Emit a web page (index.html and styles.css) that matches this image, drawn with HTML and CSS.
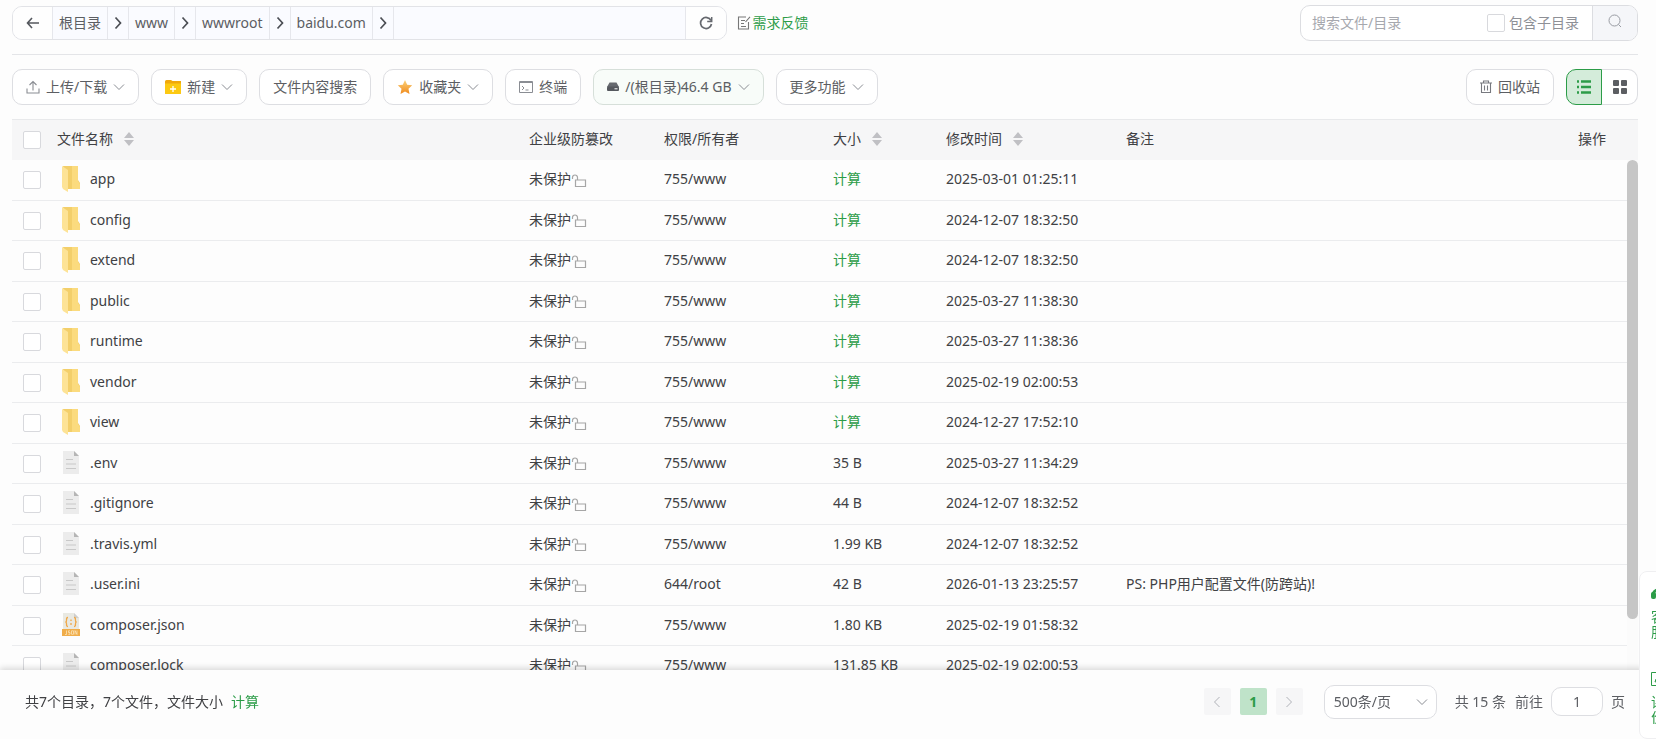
FILE: index.html
```
<!DOCTYPE html>
<html lang="zh-CN">

<head>
    <meta charset="UTF-8">
    <meta name="viewport" content="width=device-width, initial-scale=1.0">
    <title>文件管理</title>
    <link rel="stylesheet" href="styles.css">
</head>

<body>
    <!-- shared icons -->
    <svg class="sprite" width="0" height="0">
        <symbol id="i-down" viewBox="0 0 12 12"><path d="M1 3.500 6 8.500l5-5" fill="none" stroke="#8a8d93" /></symbol>
        <symbol id="i-next" viewBox="0 0 14 14"><path d="M4.500 1.500l5 5.500-5 5.500" fill="none" stroke="currentColor" stroke-width="1.700" /></symbol>
        <symbol id="i-folder" viewBox="0 0 18 26">
            <path d="M1 0h15v14l2 3v6H6z" fill="#f3cf6a" />
            <path d="M10 0h6v15l2 3v5h-8z" fill="#fbdb7e" />
            <path d="M0 0l6 4v22l-5-3-1-2z" fill="#fde396" />
        </symbol>
        <symbol id="i-file" viewBox="0 0 18 24">
            <path d="M1 0h11l5 5v18H1z" fill="#ececec" />
            <path d="M12 0l5 5h-5z" fill="#b5b5b5" />
            <path d="M4 8.500h7M4 13h10M4 17.500h10" stroke="#c8c8c8" />
        </symbol>
        <symbol id="i-json" viewBox="0 0 18 24">
            <path d="M1 0h11l5 5v12H1z" fill="#e9e9e2" />
            <path d="M12 0l5 5h-5z" fill="#cfcfcf" />
            <path d="M6 4.500c-3 0 0 4-2.500 4.500C6 9.500 3 13.500 6 13.500M12 4.500c3 0 0 4 2.500 4.500-2.500.5.500 4.500-2.500 4.500M9 6.500v1.500M9 10v2" fill="none" stroke="#f0a848" stroke-width="1.300" />
            <path d="M0 16h18v7H0z" fill="#f0ad4a" />
            <path d="M4.500 17.500v4H3M8 17.800H6.500v1.700H8v1.800H6.300M9.500 17.800h2v3.500h-2zM13 21.500v-4l2 4v-4" fill="none" stroke="#fbe3b8" stroke-width=".8" />
        </symbol>
        <symbol id="i-lock" viewBox="0 0 16 14">
            <path d="M1.500 5V3.500a2.500 2.500 0 0 1 5 0V6M4.500 6h10v6.500h-10z" fill="none" stroke="#a6a6a6" stroke-width="1.200" />
        </symbol>
        <symbol id="i-sort" viewBox="0 0 10 14"><path d="M5 0l5 6H0zM5 14l5-6H0z" fill="#c0c0c4" /></symbol>
    </svg>

    <main class="file-manager">
        <header class="top-bar">
            <nav class="path">
                <button class="path-back" aria-label="返回">
                    <svg width="14" height="12" viewBox="0 0 14 12"><path d="M6 1 1.500 6 6 11M1.500 6H13" fill="none" stroke="#55585e" stroke-width="1.600" /></svg>
                </button>
                <a href="#">根目录</a>
                <span class="sep"><svg width="14" height="14"><use href="#i-next" /></svg></span>
                <a href="#">www</a>
                <span class="sep"><svg width="14" height="14"><use href="#i-next" /></svg></span>
                <a href="#">wwwroot</a>
                <span class="sep"><svg width="14" height="14"><use href="#i-next" /></svg></span>
                <a href="#">baidu.com</a>
                <span class="sep"><svg width="14" height="14"><use href="#i-next" /></svg></span>
                <input type="text" class="path-input" aria-label="路径">
                <button class="path-refresh" aria-label="刷新">
                    <svg width="14" height="14" viewBox="0 0 14 14"><path d="M12 4.500A5.500 5.500 0 1 0 12.500 8" fill="none" stroke="#66696f" stroke-width="1.700" /><path d="M12.700 1v4.500H8.200" fill="none" stroke="#66696f" stroke-width="1.500" /></svg>
                </button>
            </nav>
            <a class="feedback" href="#">
                <svg width="14" height="14" viewBox="0 0 14 14"><path d="M9 1H1.500v12h10V6M4 4.500h4M4 7.500h3M4 10.500h5M8.500 6 13 .8" fill="none" stroke="#777" stroke-width="1.100" /></svg>需求反馈
            </a>
            <form class="search">
                <input type="text" class="search-text" placeholder="搜索文件/目录" aria-label="搜索文件/目录">
                <label><input type="checkbox">包含子目录</label>
                <button type="button" aria-label="搜索">
                    <svg width="14" height="14" viewBox="0 0 14 14"><circle cx="6.500" cy="6.500" r="5.500" fill="none" stroke="#999ca3" /><path d="M10.500 10.500 13 13" stroke="#999ca3" /></svg>
                </button>
            </form>
        </header>

        <div class="toolbar">
            <button class="btn">
                <svg width="14" height="14" viewBox="0 0 14 14"><path d="M1 8.500v4.500h12V8.500M7 10.500V1.500M3.500 5 7 1.500 10.500 5" fill="none" stroke="#8a8d93" stroke-width="1.100" /></svg>
                上传/下载
                <svg width="12" height="12"><use href="#i-down" /></svg>
            </button>
            <button class="btn">
                <svg width="16" height="14" viewBox="0 0 16 14"><path d="M0 1.500Q0 0 1.500 0H6l1.500 1H16v12q0 1-1 1H1q-1 0-1-1z" fill="#f0a80c" /><path d="M0 3.500h16V13q0 1-1 1H1q-1 0-1-1z" fill="#fcc912" /><path d="M8 6v6M5 9h6" stroke="#fff" stroke-width="1.300" /></svg>
                新建
                <svg width="12" height="12"><use href="#i-down" /></svg>
            </button>
            <button class="btn">文件内容搜索</button>
            <button class="btn">
                <svg width="16" height="16" viewBox="0 0 16 16"><defs><linearGradient id="star" x2="0" y2="1"><stop stop-color="#fbd27a" /><stop offset="1" stop-color="#f08a1c" /></linearGradient></defs><path d="M8 1l2.200 4.700 5 .6-3.700 3.500 1 5.200L8 12.500 3.500 15l1-5.200L.8 6.300l5-.6z" fill="url(#star)" /></svg>
                收藏夹
                <svg width="12" height="12"><use href="#i-down" /></svg>
            </button>
            <button class="btn">
                <svg width="14" height="14" viewBox="0 0 14 14"><path d="M.5 1.500h13v11H.5zM.5 2.500h13M3 6l2 2-2 2M6.500 10h3" fill="none" stroke="#8a8d93" /></svg>
                终端
            </button>
            <button class="btn btn-disk">
                <svg width="12" height="12" viewBox="0 0 12 12"><path d="M2.500 1.500h7L12 6H0z" fill="#66696f" /><rect y="5.500" width="12" height="4.500" rx="1" fill="#55585e" /><path d="M7.500 7.800h3" stroke="#fff" /></svg>
                /(根目录)46.4 GB
                <svg width="12" height="12"><use href="#i-down" /></svg>
            </button>
            <button class="btn">
                更多功能
                <svg width="12" height="12"><use href="#i-down" /></svg>
            </button>

            <button class="btn btn-recycle">
                <svg width="12" height="14" viewBox="0 0 12 14"><path d="M0 3h12M3.500 3V1h5v2M1.500 3v9.500h9V3M4.500 5.500v5M7.500 5.500v5" fill="none" stroke="#77797f" stroke-width="1.100" /></svg>
                回收站
            </button>
            <div class="view-switch">
                <button class="active" aria-label="列表">
                    <svg width="14" height="14" viewBox="0 0 14 14"><path d="M0 1.500h2M4 1.500h10M0 7h2M4 7h10M0 12.500h2M4 12.500h10" stroke="#2c9c48" stroke-width="2.400" /></svg>
                </button>
                <button aria-label="网格">
                    <svg width="14" height="14" viewBox="0 0 14 14" fill="#5c5e62"><rect width="6" height="6" rx="1" /><rect x="8" width="6" height="6" rx="1" /><rect y="8" width="6" height="6" rx="1" /><rect x="8" y="8" width="6" height="6" rx="1" /></svg>
                </button>
            </div>
        </div>

        <section class="table-wrap">
            <div class="table-scroll">
                <table>
                    <thead>
                        <tr>
                            <th class="col-check"><input type="checkbox" aria-label="全选"></th>
                            <th class="col-name">文件名称<svg class="sort" width="10" height="14"><use href="#i-sort" /></svg></th>
                            <th class="col-lock">企业级防篡改</th>
                            <th class="col-owner">权限/所有者</th>
                            <th class="col-size">大小<svg class="sort" width="10" height="14"><use href="#i-sort" /></svg></th>
                            <th class="col-time">修改时间<svg class="sort" width="10" height="14"><use href="#i-sort" /></svg></th>
                            <th>备注</th>
                            <th class="col-action">操作</th>
                        </tr>
                    </thead>
                    <tbody id="file-list"></tbody>
                </table>
            </div>
            <div class="scrollbar"><div class="thumb"></div></div>
        </section>

        <footer>
            <p>共7个目录，7个文件，文件大小<a href="#">计算</a></p>
            <div class="pager">
                <button class="page-btn" disabled aria-label="上一页"><svg width="14" height="14" viewBox="0 0 14 14"><path d="M9.500 2l-5 5 5 5" fill="none" stroke="#b0b2b8" /></svg></button>
                <button class="page-btn current">1</button>
                <button class="page-btn" disabled aria-label="下一页"><svg width="14" height="14" viewBox="0 0 14 14"><path d="M4.500 2l5 5-5 5" fill="none" stroke="#b0b2b8" /></svg></button>
                <div class="page-size">
                    <select aria-label="每页条数"><option>500条/页</option></select>
                    <svg width="12" height="12"><use href="#i-down" /></svg>
                </div>
                <span class="total">共 15 条</span>
                <label>前往<input type="text" value="1">页</label>
            </div>
        </footer>
    </main>

    <aside class="side-tools">
        <a href="#">
            <svg width="14" height="14" viewBox="0 0 14 14"><path d="M2 8a5 5 0 0 1 10 0" fill="none" stroke="#2c9c48" stroke-width="3" /><rect y="5" width="5" height="7" rx="2" fill="#2c9c48" /><rect x="9" y="5" width="5" height="7" rx="2" fill="#2c9c48" /></svg>
            <span>客服</span>
        </a>
        <a href="#">
            <svg width="14" height="14" viewBox="0 0 14 14"><path d="M.5.500h13v13H.5zM4 10l1-3 4-4 2 2-4 4z" fill="none" stroke="#2c9c48" /></svg>
            <span>评价</span>
        </a>
    </aside>

    <script>
        const files = [
            { name: 'app', type: 'folder', time: '2025-03-01 01:25:11' },
            { name: 'config', type: 'folder', time: '2024-12-07 18:32:50' },
            { name: 'extend', type: 'folder', time: '2024-12-07 18:32:50' },
            { name: 'public', type: 'folder', time: '2025-03-27 11:38:30' },
            { name: 'runtime', type: 'folder', time: '2025-03-27 11:38:36' },
            { name: 'vendor', type: 'folder', time: '2025-02-19 02:00:53' },
            { name: 'view', type: 'folder', time: '2024-12-27 17:52:10' },
            { name: '.env', type: 'file', size: '35 B', time: '2025-03-27 11:34:29' },
            { name: '.gitignore', type: 'file', size: '44 B', time: '2024-12-07 18:32:52' },
            { name: '.travis.yml', type: 'file', size: '1.99 KB', time: '2024-12-07 18:32:52' },
            { name: '.user.ini', type: 'file', size: '42 B', time: '2026-01-13 23:25:57', owner: '644/root', note: 'PS: PHP用户配置文件(防跨站)!' },
            { name: 'composer.json', type: 'json', size: '1.80 KB', time: '2025-02-19 01:58:32' },
            { name: 'composer.lock', type: 'file', size: '131.85 KB', time: '2025-02-19 02:00:53' }
        ];

        document.getElementById('file-list').innerHTML = files.map(file => `
            <tr>
                <td class="col-check"><input type="checkbox" aria-label="${file.name}"></td>
                <td><div class="file-name"><svg width="18" height="${file.type === 'folder' ? 26 : 24}"><use href="#i-${file.type}" /></svg>${file.name}</div></td>
                <td><div class="lock">未保护<svg width="16" height="14"><use href="#i-lock" /></svg></div></td>
                <td>${file.owner || '755/www'}</td>
                <td>${file.size || '<a href="#">计算</a>'}</td>
                <td>${file.time}</td>
                <td>${file.note || ''}</td>
                <td></td>
            </tr>
        `).join('');
    </script>
</body>

</html>
```
FILE: styles.css
```
/* General styles */
* {
    box-sizing: border-box;
}

body {
    margin: 0;
    background: #fdfdfd;
    color: #404144;
    font-family: "Noto Sans", "Noto Sans CJK SC", sans-serif;
    font-size: 14px;
    line-height: 20px;
    overflow: hidden;
}

button,
input,
select {
    font: inherit;
    color: inherit;
    margin: 0;
}

button {
    cursor: pointer;
}

svg {
    flex-shrink: 0;
}

a {
    color: #2c9c48;
    text-decoration: none;
}

input[type="checkbox"] {
    appearance: none;
    display: block;
    width: 18px;
    height: 18px;
    border: 1px solid #d8d9dd;
    border-radius: 2px;
    background: #fff;
}

.sprite {
    position: absolute;
}

.file-manager {
    display: flex;
    flex-direction: column;
    height: 100vh;
}

/* Path and search */
.top-bar {
    display: flex;
    align-items: center;
    height: 55px;
    margin: 0 18px 0 12px;
    padding-bottom: 9px;
    border-bottom: 1px solid #e4e5e8;
}

.path {
    display: flex;
    width: 44%;
    height: 34px;
    border: 1px solid #e2e3e7;
    border-radius: 10px;
    background: #fafbff;
    color: #5c5e63;
    overflow: hidden;
}

.path > * {
    display: flex;
    align-items: center;
    justify-content: center;
    border: 0;
    border-right: 1px solid #e6e7ec;
    color: inherit;
}

.path a {
    padding: 0 6px;
}

.path .sep {
    width: 21px;
    color: #4c4f55;
}

.path button {
    width: 40px;
    background: #fefefe;
}

.path .path-refresh {
    border-right: 0;
}

.path .path-input {
    flex: 1;
    min-width: 0;
    background: transparent;
}

.feedback {
    display: flex;
    align-items: center;
    gap: 1px;
    margin-left: 10px;
}

.search {
    display: flex;
    width: 338px;
    height: 36px;
    margin-left: auto;
    border: 1px solid #dcdde1;
    border-radius: 10px;
    background: #fff;
    color: #8e9096;
    overflow: hidden;
}

.search-text {
    flex: 1;
    min-width: 0;
    border: 0;
    padding: 0 11px;
    background: transparent;
}

.search-text::placeholder {
    color: #a6a8ae;
}

.search label {
    display: flex;
    align-items: center;
    gap: 4px;
    padding-right: 13px;
}

.search button {
    width: 45px;
    border: 0;
    border-left: 1px solid #dcdde1;
    background: #f5f6f9;
}

/* Toolbar */
.toolbar {
    display: flex;
    gap: 12px;
    padding: 14px 18px 14px 12px;
}

.btn {
    display: flex;
    align-items: center;
    gap: 6px;
    height: 36px;
    padding: 0 13px;
    border: 1px solid #dddee2;
    border-radius: 10px;
    background: #fff;
    color: #5c5e63;
    white-space: nowrap;
}

.btn-disk {
    background: #f8fcf9;
    border-color: #d6dfd9;
}

.btn-recycle {
    margin-left: auto;
}

.view-switch {
    display: flex;
}

.view-switch button {
    display: flex;
    align-items: center;
    justify-content: center;
    width: 36px;
    height: 36px;
    border: 1px solid #dddee2;
    border-left: 0;
    border-radius: 0 10px 10px 0;
    background: #fff;
}

.view-switch .active {
    border: 1px solid #2c9c48;
    border-radius: 10px 0 0 10px;
    background: #d4ecda;
}

/* File table */
.table-wrap {
    position: relative;
    flex: 1;
    min-height: 0;
    margin: 0 18px 0 12px;
}

.table-scroll {
    height: 100%;
    overflow: auto;
    scrollbar-width: none;
}

table {
    width: 100%;
    table-layout: fixed;
    border-collapse: separate;
    border-spacing: 0;
}

th,
td {
    height: 40px;
    padding: 0 0 2px 11px;
    border-bottom: 1px solid #ebecee;
    text-align: left;
    font-weight: normal;
    white-space: nowrap;
}

tbody tr:nth-child(odd) td {
    height: 41px;
}

th {
    position: sticky;
    top: 0;
    height: 41px;
    border-top: 1px solid #e8e9eb;
    border-bottom: 0;
    background: #f6f6f7;
}

.col-check {
    width: 34px;
    padding-bottom: 0;
}

.col-name {
    width: 472px;
}

.col-lock {
    width: 135px;
}

.col-owner {
    width: 169px;
}

.col-size {
    width: 113px;
}

.col-time {
    width: 180px;
}

.col-action {
    padding-right: 32px;
    text-align: right;
}

.sort {
    margin-left: 11px;
    vertical-align: -2px;
}

.file-name {
    display: flex;
    align-items: center;
    gap: 10px;
    height: 26px;
    padding-left: 5px;
}

.lock {
    display: flex;
    align-items: center;
}

.lock svg {
    margin-top: 3px;
}

.scrollbar {
    position: absolute;
    top: 41px;
    right: 0;
    bottom: 0;
    width: 11px;
    background: #fbfbfb;
}

.thumb {
    height: 90%;
    border-radius: 6px;
    background: #c6c6c6;
}

/* Footer */
footer {
    position: relative;
    display: flex;
    align-items: center;
    justify-content: space-between;
    height: 69px;
    padding: 0 31px 6px 25px;
    background: #fdfdfd;
    box-shadow: 0 -2px 6px rgba(0, 0, 0, 0.15);
}

footer p {
    margin: 0;
}

footer p a {
    margin-left: 8px;
}

.pager {
    display: flex;
    align-items: center;
    gap: 9px;
    color: #5c5e63;
}

.page-btn {
    display: flex;
    align-items: center;
    justify-content: center;
    width: 27px;
    height: 27px;
    padding: 0;
    border: 0;
    border-radius: 2px;
    background: #f6f6f7;
}

.page-btn.current {
    background: #bfe3c9;
    color: #2c9c48;
    font-weight: bold;
}

.page-size {
    position: relative;
    width: 113px;
    margin: 0 9px 0 12px;
}

.page-size select {
    appearance: none;
    width: 100%;
    height: 34px;
    padding: 0 9px;
    border: 1px solid #dddee2;
    border-radius: 10px;
    background: #fff;
}

.page-size svg {
    position: absolute;
    top: 11px;
    right: 9px;
    pointer-events: none;
}

.pager label {
    display: flex;
    align-items: center;
    gap: 8px;
}

.pager label input {
    width: 52px;
    height: 29px;
    border: 1px solid #dddee2;
    border-radius: 10px;
    background: #fff;
    text-align: center;
}

/* Side tools */
.side-tools {
    position: fixed;
    right: -21px;
    bottom: 0;
    display: flex;
    flex-direction: column;
    gap: 33px;
    width: 38px;
    height: 168px;
    padding-top: 15px;
    border: 1px solid #efeff1;
    border-radius: 8px;
    background: #fff;
}

.side-tools a {
    display: flex;
    flex-direction: column;
    align-items: center;
    gap: 8px;
}

.side-tools span {
    width: 14px;
    line-height: 15px;
}
```
